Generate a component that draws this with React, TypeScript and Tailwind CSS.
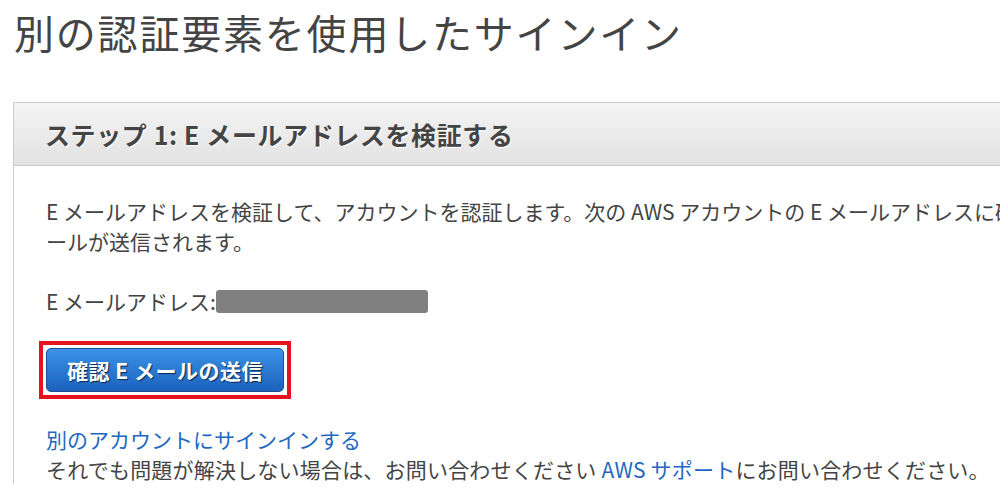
import React from "react";

const jp = "font-['Noto_Sans_CJK_JP','Noto_Sans',sans-serif]";

export default function App() {
  return (
    <div className={`w-[1000px] h-[499px] overflow-hidden bg-white text-[#444] ${jp}`}>
      <div className="pl-[13px]">
        {/* Page title */}
        <h1 className="pl-[1px] pt-[8px] text-[40px] leading-[48px] tracking-[1.8px] font-normal whitespace-nowrap text-[#444]">
          別の認証要素を使用したサインイン
        </h1>

        {/* Step panel — runs off the right edge */}
        <div className="mt-[46px] w-[1100px] border-l border-t border-[#ccc]">
          <div className="h-[63px] flex items-center pl-[31px] border-b border-[#ccc] bg-gradient-to-b from-[#f4f4f4] to-[#e2e2e2]">
            <h2 className="text-[25px] leading-[30px] tracking-[0.6px] font-bold whitespace-nowrap text-[#444] [text-shadow:1px_1px_0_#fff]">
              ステップ 1: E メールアドレスを検証する
            </h2>
          </div>

          <div className="pl-[32px] pt-[30px] text-[21px] leading-[30px]">
            <p className="whitespace-nowrap">
              E メールアドレスを検証して、アカウントを認証します。次の AWS アカウントの E メールアドレスに確認メ
              <br />
              ールが送信されます。
            </p>

            <p className="mt-[30px] whitespace-nowrap flex items-center">
              <span>E メールアドレス:</span>
              <span className="inline-block w-[212px] h-[23px] rounded-[3px] bg-[#808080] blur-[0.6px]" />
            </p>

            {/* Highlighted send button */}
            <div className="mt-[25px] -ml-[7px] inline-flex p-[3px] border-4 border-[#e5131d]">
              <button className="w-[238px] h-[44px] rounded-[5px] border border-[#1c4f95] bg-gradient-to-b from-[#3c92e8] to-[#1c62bb] text-white text-[21px] tracking-[0.5px] font-bold whitespace-nowrap [text-shadow:1px_1px_1px_#0b2a55]">
                確認 E メールの送信
              </button>
            </div>

            <div className="mt-[25px]">
              <a href="#" className="block text-[#1f68c1] whitespace-nowrap">
                別のアカウントにサインインする
              </a>
              <p className="whitespace-nowrap tracking-[0.2px]">
                それでも問題が解決しない場合は、お問い合わせください{" "}
                <a href="#" className="text-[#1f68c1]">
                  AWS サポート
                </a>
                にお問い合わせください。
              </p>
            </div>
          </div>
        </div>
      </div>
    </div>
  );
}
